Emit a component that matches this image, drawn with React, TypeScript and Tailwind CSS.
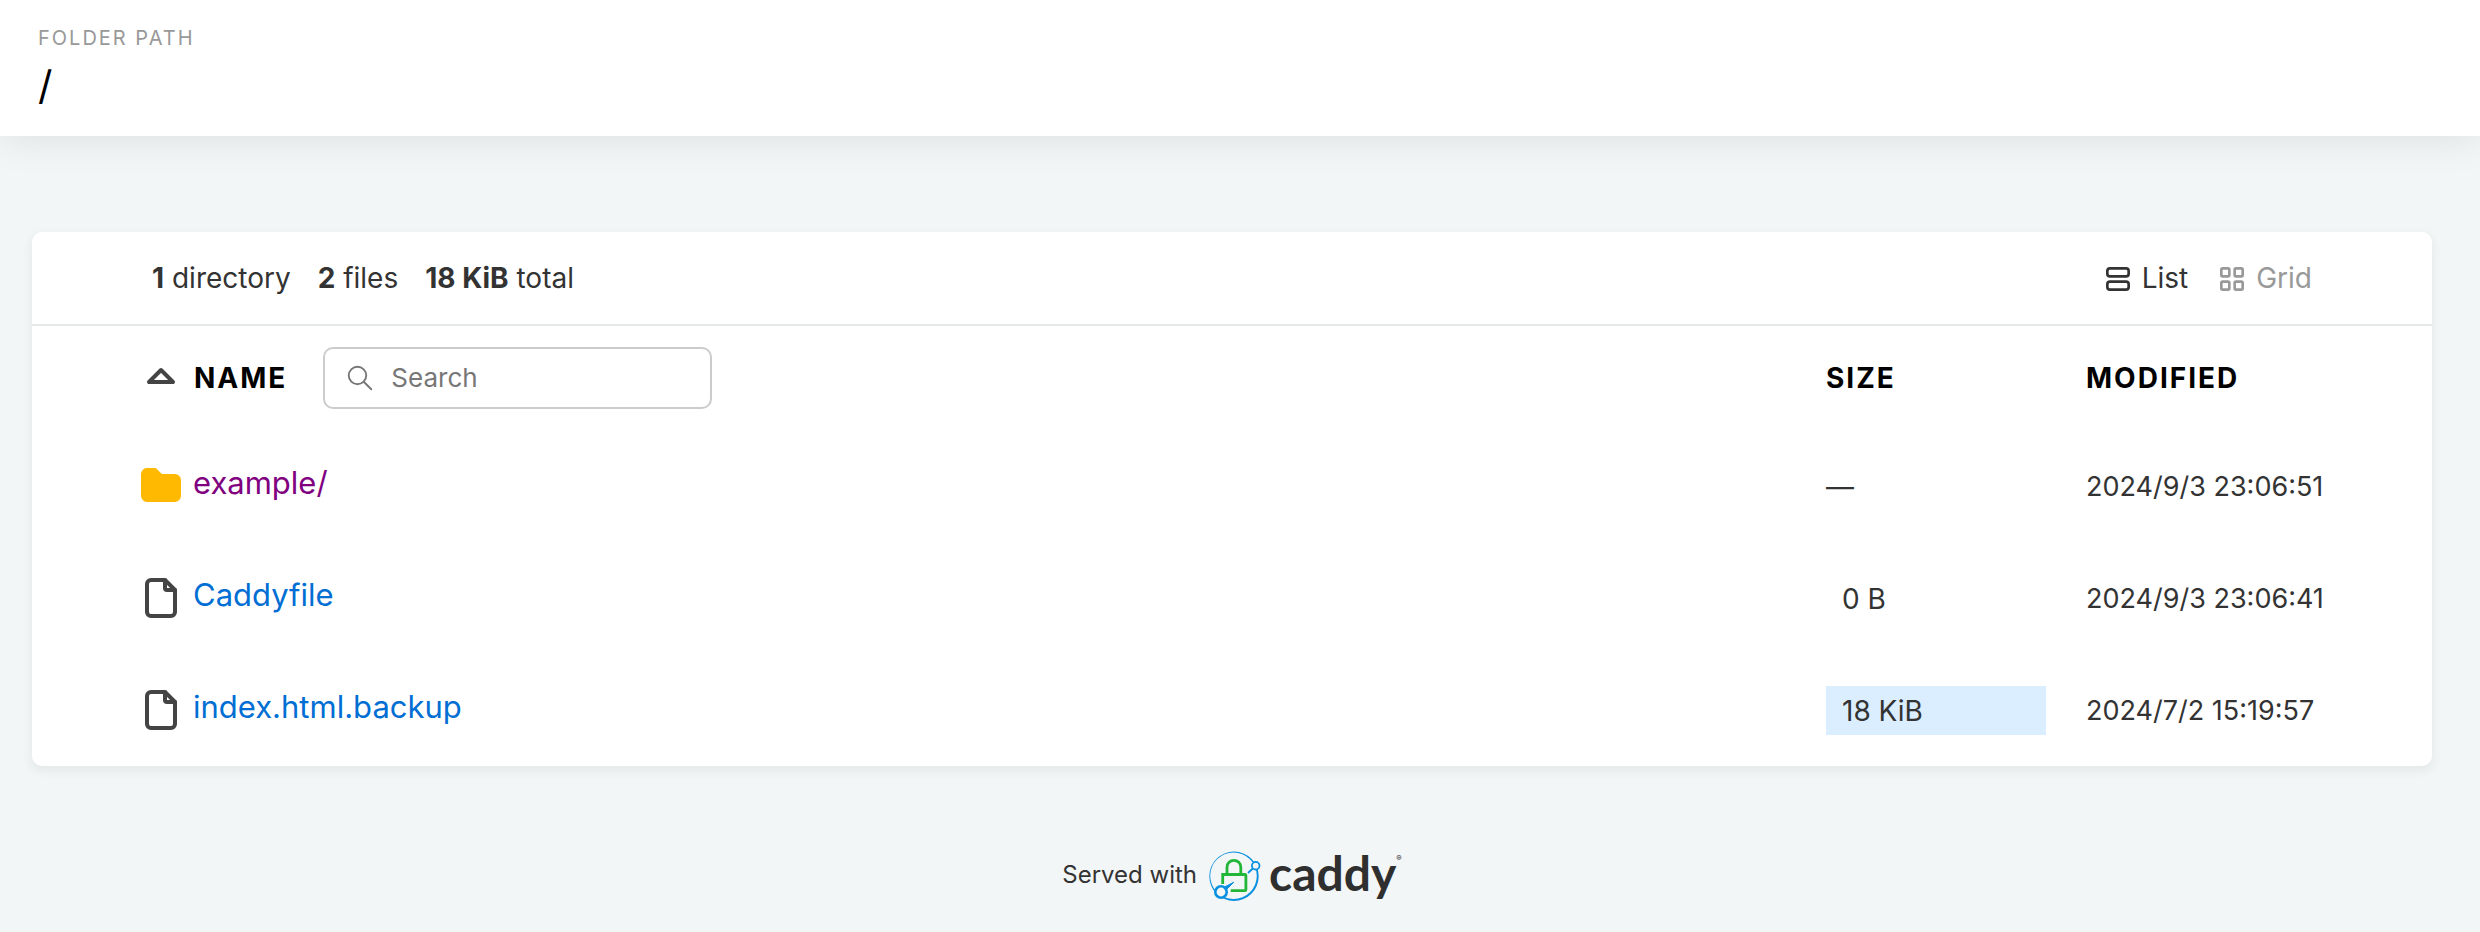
import { useState } from "react";
import type { ReactNode } from "react";

interface FileEntry {
  name: string;
  isDir: boolean;
  visited?: boolean;
  size: string;
  percent: number;
  modified: string;
}

const entries: FileEntry[] = [
  { name: "example/", isDir: true, visited: true, size: "—", percent: 0, modified: "2024/9/3 23:06:51" },
  { name: "Caddyfile", isDir: false, size: "0 B", percent: 0, modified: "2024/9/3 23:06:41" },
  { name: "index.html.backup", isDir: false, size: "18 KiB", percent: 100, modified: "2024/7/2 15:19:57" },
];

function StrokeIcon({ className, width = 2, children }: { className: string; width?: number; children: ReactNode }) {
  return (
    <svg
      className={className}
      viewBox="0 0 24 24"
      fill="none"
      stroke="currentColor"
      strokeWidth={width}
      strokeLinecap="round"
      strokeLinejoin="round"
      aria-hidden="true"
    >
      {children}
    </svg>
  );
}

function FolderIcon() {
  return (
    <svg className="size-12 shrink-0 text-[#ffb900]" viewBox="0 0 24 24" fill="currentColor" aria-hidden="true">
      <path d="M9 3a1 1 0 0 1 .608 .206l.1 .087l2.706 2.707h6.586a3 3 0 0 1 2.995 2.824l.005 .176v8a3 3 0 0 1 -2.824 2.995l-.176 .005h-14a3 3 0 0 1 -2.995 -2.824l-.005 -.176v-11a3 3 0 0 1 2.824 -2.995l.176 -.005h4z" />
    </svg>
  );
}

function FileIcon() {
  return (
    <StrokeIcon className="size-12 shrink-0 text-[#444]">
      <path d="M14 3v4a1 1 0 0 0 1 1h4" />
      <path d="M17 21h-10a2 2 0 0 1 -2 -2v-14a2 2 0 0 1 2 -2h7l5 5v11a2 2 0 0 1 -2 2z" />
    </StrokeIcon>
  );
}

function CaddyLogo() {
  return (
    <a href="#caddy" className="flex items-center gap-2 text-[#2f2f2f]" aria-label="caddy">
      <svg className="size-[54px]" viewBox="0 0 54 54" fill="none" aria-hidden="true">
        {/* orbit: two off-centre circles, so the ring thickens at the lower right */}
        <path
          fill="#0a90e0"
          fillRule="evenodd"
          d="M2.300 26.200a24.700 24.700 0 1 0 49.400 0a24.700 24.700 0 1 0 -49.400 0ZM3.200 25.800a23.300 23.300 0 1 0 46.600 0a23.300 23.300 0 1 0 -46.600 0Z"
        />
        <path
          d="M20 24V17.200a6.900 6.900 0 0 1 13.800 0V24M15.700 34V24.500H37.900a1 1 0 0 1 1 1V39.700a1 1 0 0 1 -1 1H23.700"
          stroke="#22b638"
          strokeWidth="2.800"
        />
        <circle cx="48.700" cy="15.700" r="3.800" fill="#f3f6f7" stroke="#0a90e0" strokeWidth="1.800" />
        <path d="M45.800 18.500L41 23" stroke="#0a90e0" strokeWidth="1.800" />
        <path d="M17.500 37L26.800 32.200L19.500 39.500Z" fill="#0a90e0" stroke="#0a90e0" />
        <circle cx="14" cy="42" r="5.700" fill="#f3f6f7" stroke="#0a90e0" strokeWidth="2.600" />
      </svg>
      <span className="flex items-start pb-2">
        <span className="font-['Lato',sans-serif] text-[48px] leading-[46px] font-bold">caddy</span>
        <span className="pt-1 font-['Inter',sans-serif] text-[8px] leading-[8px]">®</span>
      </span>
    </a>
  );
}

function NameCell({ entry }: { entry: FileEntry }) {
  return (
    <a
      href={`#${entry.name}`}
      className={`flex items-center gap-2 text-[31px] leading-[48px] ${
        entry.visited ? "text-[#800080]" : "text-[#006ed3]"
      }`}
    >
      {entry.isDir ? <FolderIcon /> : <FileIcon />}
      <span className="pb-[6px]">{entry.name}</span>
    </a>
  );
}

function SizeCell({ entry }: { entry: FileEntry }) {
  if (entry.isDir) return <>{entry.size}</>;
  return (
    <div className="relative h-[49px] w-[220px]">
      <div className="absolute inset-y-0 left-0 bg-[#daeeff]" style={{ width: `${entry.percent}%` }} />
      <div className="relative px-4 leading-[50px]">{entry.size}</div>
    </div>
  );
}

export default function App() {
  const [layout, setLayout] = useState("list");
  const [filter, setFilter] = useState("");
  const visible = entries.filter((e) => e.name.toLowerCase().includes(filter.toLowerCase()));

  return (
    <div className="min-h-screen bg-[#f3f6f7] font-['Inter',sans-serif] text-[28px] leading-[34px] text-[#333]">
      <header className="bg-white px-[38px] pt-6 pb-[22px] shadow-[0_0_40px_0_rgba(0,0,0,0.1)]">
        <div className="text-[20px] leading-7 tracking-[2px] text-[#999] uppercase">Folder Path</div>
        <h1 className="pt-[10px] pb-1 text-[40px] leading-[48px] text-black">/</h1>
      </header>

      <div className="pr-4">
        <main className="mx-8 mt-24 rounded-[10px] bg-white shadow-[0_4px_10px_2px_rgba(0,0,0,0.05)]">
          <div className="flex h-[94px] items-center justify-between border-b-2 border-[#e5e9ea] px-[5%]">
            <div className="flex gap-[27px]">
              <span><b>1</b> directory</span>
              <span><b>2</b> files</span>
              <span><b>18 KiB</b> total</span>
            </div>
            <div className="flex gap-7">
              <button
                type="button"
                onClick={() => setLayout("list")}
                className={`flex items-end gap-2 ${layout === "list" ? "text-[#333]" : "text-[#999]"}`}
              >
                <StrokeIcon className="size-8">
                  <rect x="4" y="4" width="16" height="6" rx="2" />
                  <rect x="4" y="14" width="16" height="6" rx="2" />
                </StrokeIcon>
                List
              </button>
              <button
                type="button"
                onClick={() => setLayout("grid")}
                className={`flex items-end gap-2 ${layout === "grid" ? "text-[#333]" : "text-[#999]"}`}
              >
                <StrokeIcon className="size-8">
                  <rect x="4" y="4" width="6" height="6" rx="1" />
                  <rect x="14" y="4" width="6" height="6" rx="1" />
                  <rect x="4" y="14" width="6" height="6" rx="1" />
                  <rect x="14" y="14" width="6" height="6" rx="1" />
                </StrokeIcon>
                Grid
              </button>
            </div>
          </div>

          <table className="w-full table-fixed text-left">
            <thead>
              <tr className="h-[104px] tracking-[2px] text-black">
                <th className="p-0 pl-[105px]">
                  <div className="flex items-center">
                    <a href="#sort-name" className="flex items-center gap-[9px] uppercase">
                      <StrokeIcon className="size-12 text-[#444]">
                        <path d="M18 14l-6 -6l-6 6h12" />
                      </StrokeIcon>
                      Name
                    </a>
                    <label className="ml-9 flex h-[62px] w-[389px] items-center rounded-[10px] border-2 border-[#ccc] px-5 font-normal tracking-normal text-[#777]">
                      <StrokeIcon className="size-[30px] shrink-0" width={1.5}>
                        <circle cx="10" cy="10" r="7" />
                        <path d="M21 21l-6 -6" />
                      </StrokeIcon>
                      <input
                        type="search"
                        aria-label="Search"
                        placeholder="Search"
                        value={filter}
                        onChange={(e) => setFilter(e.target.value)}
                        className="ml-4 w-full min-w-0 bg-transparent text-[26px] outline-none placeholder:text-[#777]"
                      />
                    </label>
                  </div>
                </th>
                <th className="w-[260px] p-0"><a href="#sort-size" className="uppercase">Size</a></th>
                <th className="w-[346px] p-0"><a href="#sort-modified" className="uppercase">Modified</a></th>
              </tr>
            </thead>
            <tbody>
              {visible.map((entry) => (
                <tr key={entry.name} className="h-28">
                  <td className="p-0 pl-[105px]"><NameCell entry={entry} /></td>
                  <td className="p-0 pt-px"><SizeCell entry={entry} /></td>
                  <td className="p-0 pt-[2px] text-[27px] whitespace-nowrap"><time>{entry.modified}</time></td>
                </tr>
              ))}
            </tbody>
          </table>
        </main>

        <footer className="flex items-center justify-center gap-[10px] pt-[84px] text-[24px] leading-8">
          <span className="pb-1">Served with</span>
          <CaddyLogo />
        </footer>
      </div>
    </div>
  );
}
